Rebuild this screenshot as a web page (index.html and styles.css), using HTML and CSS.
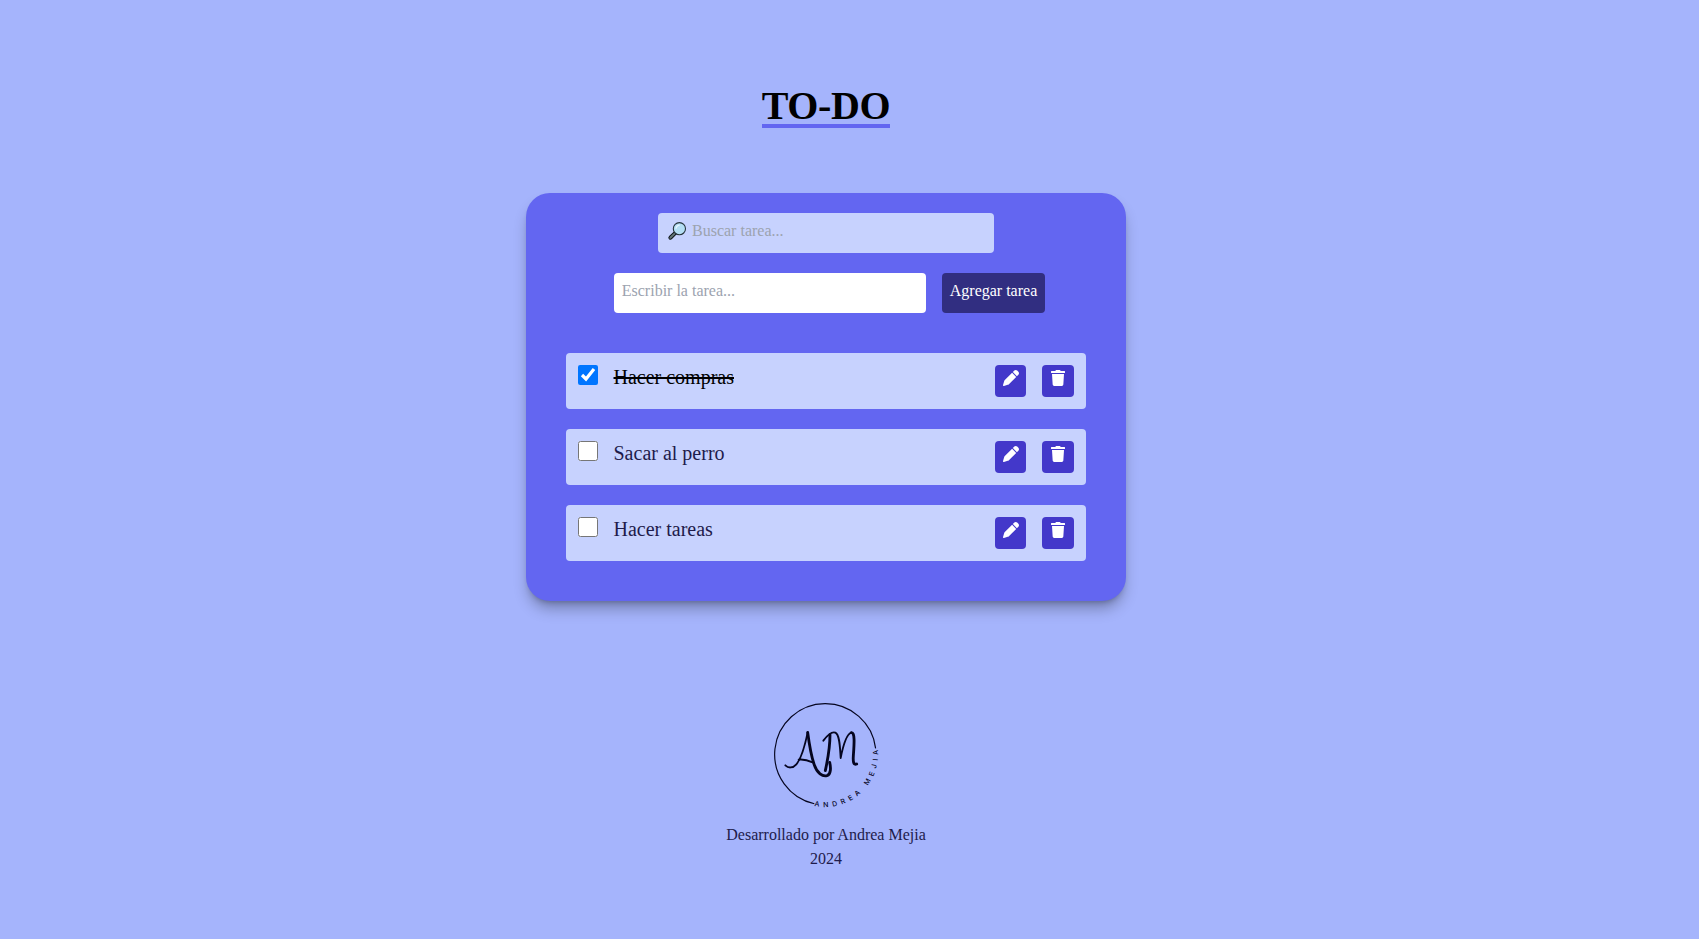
FILE: index.html
```html
<!DOCTYPE html>
<html lang="es">
<head>
<meta charset="utf-8">
<title>TO-DO</title>
<link rel="stylesheet" href="styles.css">
</head>
<body>
<main class="page">
  <header class="head"><h1 class="title">TO-DO</h1></header>
  <section class="card">
    <div class="search">
      <svg class="lens" viewBox="0 0 20 20" aria-hidden="true">
        <path d="M2.500 15.300l5.400-4.900 1.900 2-5.200 5.300c-.7.7-1.500.7-2.200.1-.7-.7-.6-1.800.1-2.500z" fill="#66787a" stroke="#10181c" stroke-width="1.100" stroke-linejoin="round"/>
        <circle cx="12.400" cy="7.700" r="6.100" fill="#b4def4" stroke="#26343c" stroke-width="1.100"/>
        <path d="M9 7.400c.3-1.800 1.500-3 3.300-3.300" fill="none" stroke="#e6f6ff" stroke-width="1.100" stroke-linecap="round"/>
      </svg>
      <input class="search-input" type="text" placeholder="Buscar tarea...">
    </div>
    <div class="add">
      <input class="add-input" type="text" placeholder="Escribir la tarea...">
      <button class="add-btn" type="button">Agregar tarea</button>
    </div>
    <ul class="list">
      <li class="item">
        <input class="check" type="checkbox" checked>
        <span class="label done">Hacer compras</span>
        <button class="act act-edit" type="button" aria-label="Editar"><svg class="ico-pen" viewBox="0 0 512 512"><path fill="currentColor" d="M362.7 19.3L314.3 67.7 444.3 197.700l48.400-48.400c25-25 25-65.500 0-90.500L453.300 19.300c-25-25-65.500-25-90.500 0zm-71 71L58.600 323.500c-10.400 10.400-18 23.300-22.200 37.400L1 481.200C-1.500 489.700.8 498.800 7 505s15.300 8.500 23.700 6.100l120.300-35.400c14.100-4.200 27-11.800 37.400-22.200L421.700 220.300 291.700 90.300z"/></svg></button>
        <button class="act act-del" type="button" aria-label="Eliminar"><svg class="ico-trash" viewBox="0 0 448 512"><path fill="currentColor" d="M432 32H312l-9.400-18.700A24 24 0 0 0 281.100 0H166.800a23.720 23.720 0 0 0-21.400 13.300L136 32H16A16 16 0 0 0 0 48v32a16 16 0 0 0 16 16h416a16 16 0 0 0 16-16V48a16 16 0 0 0-16-16zM53.200 467a48 48 0 0 0 47.900 45h245.800a48 48 0 0 0 47.900-45L416 128H32z"/></svg></button>
      </li>
      <li class="item">
        <input class="check" type="checkbox">
        <span class="label">Sacar al perro</span>
        <button class="act act-edit" type="button" aria-label="Editar"><svg class="ico-pen" viewBox="0 0 512 512"><path fill="currentColor" d="M362.7 19.3L314.3 67.7 444.3 197.700l48.400-48.400c25-25 25-65.500 0-90.500L453.300 19.300c-25-25-65.500-25-90.500 0zm-71 71L58.600 323.500c-10.400 10.400-18 23.300-22.200 37.400L1 481.200C-1.500 489.700.8 498.800 7 505s15.300 8.500 23.700 6.100l120.300-35.400c14.100-4.200 27-11.800 37.400-22.200L421.700 220.300 291.700 90.300z"/></svg></button>
        <button class="act act-del" type="button" aria-label="Eliminar"><svg class="ico-trash" viewBox="0 0 448 512"><path fill="currentColor" d="M432 32H312l-9.400-18.700A24 24 0 0 0 281.100 0H166.800a23.720 23.720 0 0 0-21.400 13.300L136 32H16A16 16 0 0 0 0 48v32a16 16 0 0 0 16 16h416a16 16 0 0 0 16-16V48a16 16 0 0 0-16-16zM53.200 467a48 48 0 0 0 47.900 45h245.800a48 48 0 0 0 47.900-45L416 128H32z"/></svg></button>
      </li>
      <li class="item">
        <input class="check" type="checkbox">
        <span class="label">Hacer tareas</span>
        <button class="act act-edit" type="button" aria-label="Editar"><svg class="ico-pen" viewBox="0 0 512 512"><path fill="currentColor" d="M362.7 19.3L314.3 67.7 444.3 197.700l48.400-48.400c25-25 25-65.500 0-90.500L453.300 19.300c-25-25-65.500-25-90.500 0zm-71 71L58.600 323.500c-10.400 10.400-18 23.300-22.200 37.400L1 481.200C-1.500 489.700.8 498.800 7 505s15.300 8.500 23.700 6.100l120.300-35.400c14.100-4.200 27-11.800 37.400-22.200L421.700 220.300 291.700 90.300z"/></svg></button>
        <button class="act act-del" type="button" aria-label="Eliminar"><svg class="ico-trash" viewBox="0 0 448 512"><path fill="currentColor" d="M432 32H312l-9.400-18.700A24 24 0 0 0 281.100 0H166.800a23.720 23.720 0 0 0-21.400 13.300L136 32H16A16 16 0 0 0 0 48v32a16 16 0 0 0 16 16h416a16 16 0 0 0 16-16V48a16 16 0 0 0-16-16zM53.200 467a48 48 0 0 0 47.900 45h245.800a48 48 0 0 0 47.900-45L416 128H32z"/></svg></button>
      </li>
    </ul>
  </section>
  <footer class="foot">
    <svg class="logo" viewBox="0 0 360 360" role="img" aria-label="Logo Andrea Mejia">
      <path class="ring" d="M145 326.400A152 152 0 1 1 328.900 160"/>
      <g class="mono-group">
        <path class="mono-thin" d="M58 207c8 8 22 10 33-3 15-18 27-62 34-96"/>
        <path class="mono" d="M125 108c4 30 10 70 20 98 8 24 25 36 38 32 12-4 12-24 8-40"/>
        <path class="mono-thin" d="M98 190c14-2 28 2 42 8"/>
        <path class="mono" d="M192 115c0 40-8 80-14 108"/>
        <path class="mono-thin" d="M172 133c12-16 26-28 36-24 14 6 14 50 16 76 6-30 16-72 32-76"/>
        <path class="mono" d="M256 109c12-2 8 40 6 70-1 16 0 28 10 24"/>
      </g>
      <path id="logo-arc" class="arc" d="M145 332.500A158 158 0 0 0 332.700 146"/>
      <text class="logo-name"><textPath href="#logo-arc">ANDREA MEJIA</textPath></text>
    </svg>
    <p class="credit">Desarrollado por Andrea Mejia</p>
    <p class="credit">2024</p>
  </footer>
</main>
</body>
</html>
```

FILE: styles.css
```css
* { box-sizing: border-box; }
html, body { margin: 0; padding: 0; }
body {
  min-height: 939px;
  background: #a5b4fc;
  color: #1e1b4b;
  font-family: "Liberation Serif", "Times New Roman", serif;
  font-size: 16px;
}
.page {
  width: 1652px;
  padding-top: 88px;
  display: flex;
  flex-direction: column;
  align-items: center;
}
.head { height: 105px; }
.title {
  margin: 0;
  font-size: 40px;
  line-height: 36px;
  letter-spacing: -.4px;
  font-weight: 700;
  color: #000;
  border-bottom: 4px solid #6366f1;
}
.card {
  width: 600px;
  padding: 20px 40px 40px;
  background: #6366f1;
  border-radius: 24px;
  box-shadow: 0 10px 15px -3px rgba(0,0,0,.3), 0 4px 6px -4px rgba(0,0,0,.3);
  display: flex;
  flex-direction: column;
  align-items: center;
}
.search {
  width: 336px;
  height: 40px;
  padding-left: 9px;
  background: #c7d2fe;
  border-radius: 4px;
  display: flex;
  align-items: flex-start;
}
.lens { width: 20px; height: 20px; margin-top: 8px; flex: none; }
.search-input, .add-input {
  font: inherit;
  color: #1e1b4b;
  border: 0;
  outline: 0;
  background: transparent;
}
.search-input { flex: 1; min-width: 0; height: 36px; padding: 0 8px 0 5px; }
.add {
  margin-top: 20px;
  padding-left: 7px;
  display: flex;
  gap: 16px;
}
.add-input {
  width: 312px;
  height: 40px;
  padding: 0 8px 4px;
  background: #fff;
  border-radius: 4px;
}
.search-input::placeholder, .add-input::placeholder { color: #9ca3af; opacity: 1; }
.add-btn {
  height: 40px;
  padding: 0 8px 4px;
  font: inherit;
  color: #fff;
  background: #312e81;
  border: 0;
  border-radius: 4px;
}
.list {
  list-style: none;
  width: 520px;
  margin: 40px 0 0;
  padding: 0;
  display: flex;
  flex-direction: column;
  gap: 20px;
}
.item {
  height: 56px;
  padding: 12px;
  background: #c7d2fe;
  border-radius: 4px;
  display: flex;
  align-items: flex-start;
}
.check { width: 20px; height: 20px; margin: 0 15.5px 0 0; flex: none; }
.label { flex: 1; font-size: 20px; line-height: 24px; }
.done { color: #000; text-decoration: line-through; }
.act {
  height: 32px;
  padding: 5px 0 0;
  color: #fff;
  background: #4338ca;
  border: 0;
  border-radius: 4px;
  display: flex;
  justify-content: center;
}
.act-edit { width: 31px; }
.act-del { width: 32px; margin-left: 16px; }
.ico-pen { width: 16px; height: 16px; }
.ico-trash { width: 14px; height: 16px; }
.foot {
  margin-top: 94px;
  display: flex;
  flex-direction: column;
  align-items: center;
}
.logo { width: 120px; height: 120px; display: block; margin-bottom: 8px; }
.ring, .arc, .mono, .mono-thin { fill: none; }
.ring { stroke: #05051f; stroke-width: 3.5; }
.mono-group { transform: translateY(4px); }
.mono { stroke: #05051f; stroke-width: 8.5; stroke-linecap: round; stroke-linejoin: round; }
.mono-thin { stroke: #05051f; stroke-width: 5.5; stroke-linecap: round; stroke-linejoin: round; }
.logo-name {
  font-family: Inter, "Liberation Sans", sans-serif;
  font-size: 21px;
  font-weight: 500;
  letter-spacing: 12.5px;
  fill: #05051f;
}
.credit { margin: 0; line-height: 24px; }
```
